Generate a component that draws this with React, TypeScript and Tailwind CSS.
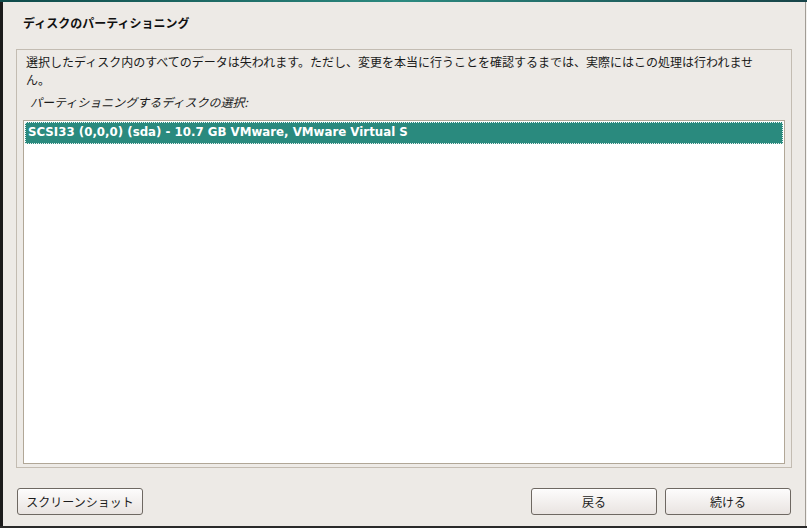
import React from 'react'

const jp = '"Noto Sans CJK JP", "DejaVu Sans", sans-serif'
const latin = '"DejaVu Sans", "Noto Sans CJK JP", sans-serif'

function GtkButton({ label, className = '' }: { label: string; className?: string }) {
  return (
    <button
      className={`h-[27px] w-[126px] rounded-[3px] border border-[#6e6862] bg-gradient-to-b from-[#fdfcfc] to-[#e9e4e1] text-[12px] text-[#1c1c1c] shadow-[inset_0_1px_0_#ffffff] ${className}`}
      style={{ fontFamily: jp }}
    >
      {label}
    </button>
  )
}

export default function App() {
  return (
    <div className="flex h-[528px] w-[807px] flex-col bg-[#1b1b1b]">
      <div className="h-[2px] w-full bg-gradient-to-r from-[#0f4a4a] via-[#2c8a80] to-[#174448]" />
      <div className="flex flex-1 pl-[3px]">
        <div className="flex flex-1 flex-col border-r border-[#a19c95] bg-[#edeae6]" style={{ fontFamily: jp }}>
          {/* title */}
          <div className="flex h-[40px] items-center pl-[20px] pt-[1px] text-[12px] font-bold text-[#111]">
            ディスクのパーティショニング
          </div>

          {/* main frame */}
          <div className="mx-[13px] mt-[7px] flex h-[419px] w-[776px] flex-col border border-[#c3bcb2] px-[6px] pb-[3px] pt-[3px]">
            <p className="w-[744px] pl-[3px] text-[12px] leading-[18px] text-[#1a1a1a]">
              選択したディスク内のすべてのデータは失われます。ただし、変更を本当に行うことを確認するまでは、実際にはこの処理は行われません。
            </p>
            <div className="mt-[4px] pl-[7px] text-[12px] italic leading-[18px] text-[#1a1a1a]">
              パーティショニングするディスクの選択:
            </div>
            <div className="mt-[9px] flex-1 border border-[#b1a797] bg-white p-[1px]">
              <div
                className="flex h-[22px] items-center border border-dotted border-[#e8f3f1] bg-[#2a8a7e] pl-[2px] text-[11.8px] font-bold text-white"
                style={{ fontFamily: latin }}
              >
                SCSI33 (0,0,0) (sda) - 10.7 GB VMware, VMware Virtual S
              </div>
            </div>
          </div>

          {/* buttons */}
          <div className="mt-[20px] flex pl-[14px] pr-[14px]">
            <GtkButton label="スクリーンショット" />
            <div className="flex-1" />
            <GtkButton label="戻る" />
            <GtkButton label="続ける" className="ml-[8px]" />
          </div>
        </div>
        <div className="w-[2px] bg-[#f4f2ef]" />
      </div>
      <div className="h-[2px] w-full bg-[#2a2a2a]" />
    </div>
  )
}
